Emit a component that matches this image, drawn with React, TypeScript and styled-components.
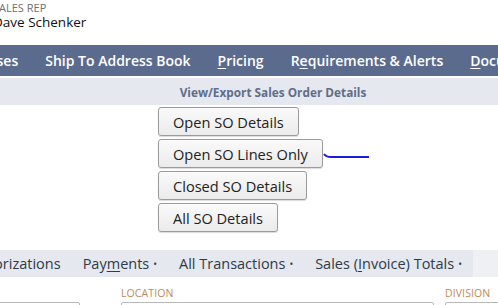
import React from "react";
import styled, { createGlobalStyle } from "styled-components";

const Global = createGlobalStyle`
  html, body { margin: 0; padding: 0; background: #fff; overflow: hidden; }
  body { font-family: "Open Sans", "Liberation Sans", sans-serif; width: 498px; height: 305px; }
`;

const Page = styled.div`
  width: 498px;
  height: 305px;
  overflow: hidden;
  display: flex;
  flex-direction: column;
`;

const Header = styled.div`
  display: flex;
  flex-direction: column;
  margin-left: -7px;
  padding-top: 1px;
  height: 45px;
  box-sizing: border-box;
  flex: none;
`;

const FieldLabel = styled.div`
  font-size: 11px;
  line-height: 13px;
  color: #6f6f6f;
`;

const FieldValue = styled.div`
  font-size: 13.5px;
  line-height: 17px;
  color: #111;
`;

const NavBar = styled.div`
  height: 31px;
  flex: none;
  background: #5b6b8e;
  display: flex;
  align-items: center;
  gap: 27px;
  margin-left: -51px;
  white-space: nowrap;
`;

const NavItem = styled.span`
  color: #fff;
  font-size: 14px;
  font-weight: 600;
  u { text-decoration: underline; text-underline-offset: 2px; }
`;

const Gap = styled.div`
  height: 2px;
  flex: none;
`;

const TitleBand = styled.div`
  height: 27px;
  flex: none;
  background: #e5e8ee;
  display: flex;
  align-items: center;
  justify-content: center;
  padding-left: 48px;
`;

const Title = styled.span`
  font-size: 11.8px;
  font-weight: 700;
  color: #5f6e8a;
`;

const ButtonArea = styled.div`
  display: flex;
  flex-direction: column;
  align-items: flex-start;
  gap: 3px;
  padding: 2px 0 0 158px;
  height: 145px;
  box-sizing: border-box;
  flex: none;
`;

const ButtonRow = styled.div`
  display: flex;
  align-items: center;
`;

const Btn = styled.button`
  height: 29px;
  padding: 0 14px 0 14px;
  border: 1px solid #9a9a9a;
  border-radius: 3px;
  background: linear-gradient(#fafafa, #ebebeb);
  box-shadow: 0 1px 1px rgba(0, 0, 0, 0.15);
  font-family: "Open Sans", "Liberation Sans", sans-serif;
  font-size: 14.6px;
  color: #222;
  white-space: nowrap;
`;

const Arrow = styled.svg`
  display: block;
  margin-left: 0;
  margin-top: 4px;
`;

const TabBar = styled.div`
  height: 27px;
  flex: none;
  display: flex;
  background: #eef0f4;
`;

const TabTrack = styled.div`
  display: flex;
  align-items: center;
  background: #e5e8ee;
  width: 473px;
  flex: none;
  white-space: nowrap;
  overflow: hidden;
`;

const TabShift = styled.div`
  display: flex;
  align-items: center;
  gap: 22px;
  margin-left: -38px;
`;

const Tab = styled.span`
  font-size: 14.5px;
  color: #2f3a4a;
  u { text-decoration: underline; text-underline-offset: 2px; }
`;

const Dot = styled.span`
  font-size: 10px;
  margin-left: 4px;
  vertical-align: 1px;
`;

const Fields = styled.div`
  display: flex;
  margin-top: 10px;
  gap: 41px;
`;

const Field = styled.div<{ $w: number }>`
  width: ${(p) => p.$w}px;
  flex: none;
  display: flex;
  flex-direction: column;
`;

const Label = styled.div`
  font-size: 10.5px;
  line-height: 12px;
  height: 12px;
  color: #c08a5a;
  letter-spacing: 0.1px;
`;

const Input = styled.div`
  margin-top: 3px;
  height: 22px;
  border: 1px solid #b8b8b8;
  border-radius: 2px;
  background: #fff;
`;

const FirstField = styled(Field)`
  margin-left: -30px;
`;

const LocationField = styled(Field)`
  margin-right: -30px;
`;

export default function App() {
  return (
    <Page>
      <Global />
      <Header>
        <FieldLabel>SALES REP</FieldLabel>
        <FieldValue>Dave Schenker</FieldValue>
      </Header>
      <NavBar>
        <NavItem>Purchases</NavItem>
        <NavItem>Ship To Address Book</NavItem>
        <NavItem><u>P</u>ricing</NavItem>
        <NavItem>R<u>e</u>quirements &amp; Alerts</NavItem>
        <NavItem><u>D</u>ocuments</NavItem>
      </NavBar>
      <Gap />
      <TitleBand>
        <Title>View/Export Sales Order Details</Title>
      </TitleBand>
      <ButtonArea>
        <Btn>Open SO Details</Btn>
        <ButtonRow>
          <Btn>Open SO Lines Only</Btn>
          <Arrow width="48" height="8" viewBox="0 0 48 8">
            <path d="M1 2 Q3 5 8 5 L46 5" stroke="#1a1ae0" strokeWidth="2" fill="none" />
          </Arrow>
        </ButtonRow>
        <Btn>Closed SO Details</Btn>
        <Btn>All SO Details</Btn>
      </ButtonArea>
      <TabBar>
        <TabTrack>
          <TabShift>
            <Tab>Authorizations</Tab>
            <Tab>Pay<u>m</u>ents<Dot>•</Dot></Tab>
            <Tab>All Transactions<Dot>•</Dot></Tab>
            <Tab>Sales (<u>I</u>nvoice) Totals<Dot>•</Dot></Tab>
          </TabShift>
        </TabTrack>
      </TabBar>
      <Fields>
        <FirstField $w={110}>
          <Label />
          <Input />
        </FirstField>
        <LocationField $w={313}>
          <Label>LOCATION</Label>
          <Input />
        </LocationField>
        <Field $w={120}>
          <Label>DIVISION</Label>
          <Input />
        </Field>
      </Fields>
    </Page>
  );
}
